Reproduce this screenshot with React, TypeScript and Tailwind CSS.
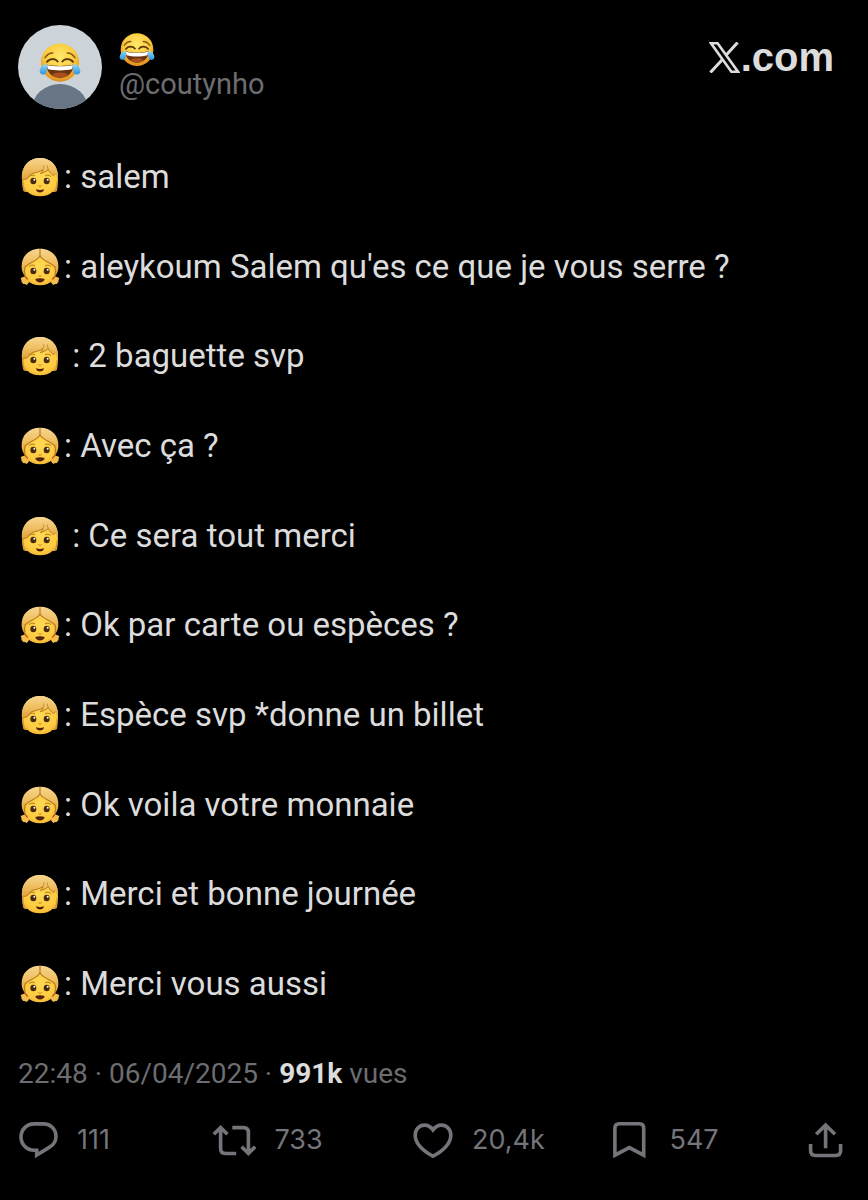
import type { ReactNode } from 'react'

type Speaker = 'child' | 'girl'

const LINES: { speaker: Speaker; text: string }[] = [
  { speaker: 'child', text: ': salem' },
  { speaker: 'girl', text: ": aleykoum Salem qu'es ce que je vous serre ?" },
  { speaker: 'child', text: ' : 2 baguette svp' },
  { speaker: 'girl', text: ': Avec ça ?' },
  { speaker: 'child', text: ' : Ce sera tout merci' },
  { speaker: 'girl', text: ': Ok par carte ou espèces ?' },
  { speaker: 'child', text: ': Espèce svp *donne un billet' },
  { speaker: 'girl', text: ': Ok voila votre monnaie' },
  { speaker: 'child', text: ': Merci et bonne journée' },
  { speaker: 'girl', text: ': Merci vous aussi' },
]

const Gradients = () => (
  <svg className="absolute size-0" aria-hidden="true">
    <defs>
      <radialGradient id="joy" cx="0.5" cy="0.35" r="0.65">
        <stop offset="0" stopColor="#ffe96b" />
        <stop offset="0.6" stopColor="#fbcb3f" />
        <stop offset="1" stopColor="#e08a1c" />
      </radialGradient>
      <radialGradient id="skin" cx="0.5" cy="0.4" r="0.65">
        <stop offset="0" stopColor="#ffd953" />
        <stop offset="0.75" stopColor="#fdcb40" />
        <stop offset="1" stopColor="#eeae30" />
      </radialGradient>
      <linearGradient id="hair" x1="0" y1="0" x2="0" y2="1">
        <stop offset="0" stopColor="#f6d68e" />
        <stop offset="0.5" stopColor="#efbf62" />
        <stop offset="1" stopColor="#dda038" />
      </linearGradient>
      <linearGradient id="tear" x1="0" y1="0" x2="0" y2="1">
        <stop offset="0" stopColor="#8fdcfb" />
        <stop offset="1" stopColor="#2f94dc" />
      </linearGradient>
    </defs>
  </svg>
)

const Joy = ({ className }: { className: string }) => (
  <svg className={className} viewBox="0 0 110 104" role="img" aria-label="😂">
    <circle cx="55" cy="51" r="50" fill="url(#joy)" />
    <path
      d="M16 38c5-8 12-12 20-12M94 38c-5-8-12-12-20-12"
      fill="none"
      stroke="#8a5311"
      strokeWidth="4"
      strokeLinecap="round"
    />
    <path
      d="M21 49c6-9 21-10 28-1M89 49c-6-9-21-10-28-1"
      fill="none"
      stroke="#5f3609"
      strokeWidth="5"
      strokeLinecap="round"
    />
    <path d="M20 56c20 5 50 5 70 0 1 20-14 35-35 35S19 76 20 56z" fill="#6b3410" />
    <path d="M21 57c20 5 48 5 68 0l-2 11c-18 5-46 5-64 0z" fill="#fff" />
    <path d="M34 83c10-8 32-8 42 0-10 9-32 9-42 0z" fill="#a9501d" />
    <path d="M20 54C9 57 1 65 2 75c1 9 14 10 18 1 2-6 2-14 0-22z" fill="url(#tear)" />
    <path d="M90 54c11 3 19 11 18 21-1 9-14 10-18 1-2-6-2-14 0-22z" fill="url(#tear)" />
  </svg>
)

const Eyes = () => (
  <>
    <ellipse cx="40" cy="72" rx="9" ry="10" fill="#4a2a0c" />
    <ellipse cx="80" cy="72" rx="9" ry="10" fill="#4a2a0c" />
    <circle cx="43" cy="68" r="3" fill="#fff" />
    <circle cx="83" cy="68" r="3" fill="#fff" />
    <path
      d="M28 58c4-4 11-5 16-2M92 58c-4-4-11-5-16-2"
      fill="none"
      stroke="#b3751c"
      strokeWidth="3"
      strokeLinecap="round"
    />
    <path d="M56 86c2 3 6 3 8 0" fill="none" stroke="#cc7d1b" strokeWidth="3" strokeLinecap="round" />
  </>
)

const Child = () => (
  <svg className="size-10 flex-none" viewBox="0 0 120 120" role="img" aria-label="🧒">
    <path d="M6 62C4 26 28 3 60 3s56 23 54 60c0 14-1 26-3 38-4 4-9 5-14 4H24c-6 1-11 0-14-4-3-12-4-25-4-39z" fill="url(#hair)" />
    <path d="M8 64c0-26 15-44 52-44s52 18 52 44c0 36-20 54-52 54S8 100 8 64z" fill="url(#skin)" />
    <path
      d="M6 70C2 28 30 3 60 3s58 23 54 67c-3-6-5-13-7-20-3 3-5 5-8 5-6-5-11-11-14-17-7 6-14 9-24 12 4-4 6-7 8-12-11 7-24 9-34 12-6 7-9 13-16 17-6 1-10 2-13 3z"
      fill="url(#hair)"
    />
    <path
      d="M6 70c5-2 10-4 15-5 5-4 9-9 14-15 10-3 23-5 34-12-2 5-4 8-8 12 10-3 17-6 24-12 3 6 8 12 14 17 3 0 5-2 8-5"
      fill="none"
      stroke="#b97a25"
      strokeWidth="3"
      strokeLinejoin="round"
    />
    <path d="M9 72c0 12 1 22 4 30M111 72c0 12-1 22-4 30" fill="none" stroke="#d29032" strokeWidth="3" />
    <path d="M69 38c2-4 3-8 2-13M85 38c-2-4-3-8-3-12" fill="none" stroke="#c68c35" strokeWidth="3" />
    <Eyes />
    <path d="M48 97c7 3 17 3 24 0-1 13-23 13-24 0z" fill="#56210e" />
  </svg>
)

const Girl = () => (
  <svg className="size-10 flex-none" viewBox="0 0 120 120" role="img" aria-label="👧">
    <path d="M20 88c-8 0-14 3-18 6 3 5 3 9 2 12 3 0 4 2 5 5 4-1 8 0 11 3 6-4 9-11 9-18z" fill="#f2bd4c" />
    <path d="M100 88c8 0 14 3 18 6-3 5-3 9-2 12-3 0-4 2-5 5-4-1-8 0-11 3-6-4-9-11-9-18z" fill="#f2bd4c" />
    <path d="M5 62C3 27 27 5 60 5s57 22 55 57c-1 12-5 20-11 25H16C10 82 6 74 5 62z" fill="url(#hair)" />
    <path d="M60 24c5 17 29 18 45 36 7 34-12 55-45 55S8 94 15 60c16-18 40-19 45-36z" fill="url(#skin)" />
    <path
      d="M60 6v19M60 25c-5 17-29 18-45 35-2 8-2 16 0 24M60 25c5 17 29 18 45 35 2 8 2 16 0 24"
      fill="none"
      stroke="#b97a25"
      strokeWidth="3.5"
      strokeLinecap="round"
    />
    <path d="M14 87l8 9M106 87l-8 9" stroke="#c4571d" strokeWidth="4" strokeLinecap="round" />
    <Eyes />
    <path d="M46 96c9-3 19-3 28 0-1 14-27 14-28 0z" fill="#56210e" />
  </svg>
)

const Avatar = () => (
  <div className="relative flex size-21 flex-none justify-center overflow-hidden rounded-full bg-[#ccd4d9]">
    <svg className="absolute inset-0 size-full" viewBox="0 0 84 84" aria-hidden="true">
      <ellipse cx="42" cy="84" rx="28" ry="25" fill="#677585" />
    </svg>
    <Joy className="relative mt-[18px] h-10 w-[42px]" />
  </div>
)

const Stroke = ({ className, viewBox, d }: { className: string; viewBox: string; d: string }) => (
  <svg className={className} viewBox={viewBox} fill="none" stroke="currentColor" strokeWidth="3.6" aria-hidden="true">
    <path d={d} />
  </svg>
)

const ACTIONS: { label: string; count: string; icon: ReactNode }[] = [
  {
    label: 'Répondre',
    count: '111',
    icon: (
      <Stroke
        className="h-10 w-10"
        viewBox="0 0 40 40"
        d="M16 3.9h9.5C32.5 3.9 38 9.3 38 16.2c0 4.6-2.4 8.6-6.4 10.9L18.7 35V30.3H16C8.5 30.3 3 24.2 3 17 3 9.5 8.8 3.9 16 3.9z"
      />
    ),
  },
  {
    label: 'Reposter',
    count: '733',
    icon: (
      <Stroke
        className="-ml-1 h-10 w-11"
        viewBox="0 0 44 40"
        d="M1.8 14.2L8.6 7.6l6.8 6.6M8.6 8v20.5q0 5 5 5H24.2M20.3 7.6H31.4q5 0 5 5V33M29.6 26.8l6.8 6.6 6.8-6.6"
      />
    ),
  },
  {
    label: 'Aimer',
    count: '20,4k',
    icon: (
      <Stroke
        className="h-10 w-10"
        viewBox="0 0 40 40"
        d="M20 9.9C17.6 6.6 14.8 5.1 11.6 5.1 6.2 5.1 2.2 9.4 2.2 15.2c0 7.6 6.2 14.6 17.8 21.1 11.6-6.5 17.8-13.5 17.8-21.1 0-5.8-4-10.1-9.4-10.1-3.2 0-6 1.5-8.4 4.8z"
      />
    ),
  },
  {
    label: 'Signet',
    count: '547',
    icon: (
      <Stroke
        className="h-10 w-10"
        viewBox="0 0 40 40"
        d="M8.2 3.8h20.2q4.3 0 4.3 4.3V35.2L18.3 27.6 3.9 35.2V8.1q0-4.3 4.3-4.3z"
      />
    ),
  },
]

const App = () => {
  return (
    <main className="flex min-h-screen flex-col bg-black px-[18px] pt-[25px] pb-10 font-['Roboto',sans-serif] text-[#dcdcdc]">
      <Gradients />

      <header className="flex items-start">
        <Avatar />
        <div className="ml-[17px] pt-2">
          <Joy className="h-[34px] w-9" />
          <a href="#profil" className="block text-[29px] leading-[34px] text-[#6b6d70]">
            @coutynho
          </a>
        </div>
        <a
          href="#x"
          className="mt-[10px] mr-4 ml-auto flex items-center gap-px font-['Liberation_Sans',sans-serif] text-[40px] leading-[44px] font-bold"
        >
          <svg className="h-[31px] w-[31px]" viewBox="0 0 31 31" fill="none" stroke="currentColor" aria-label="X">
            <path d="M2 1.3h6.6L29 29.7h-6.6z" strokeWidth="2.6" />
            <path d="M28.6 0.5L16.8 13.6M13.4 17.6L1.4 30.5" strokeWidth="3" />
          </svg>
          .com
        </a>
      </header>

      <div className="mt-[46px] mb-[50px] flex flex-1 flex-col justify-between gap-4">
        {LINES.map(({ speaker, text }) => (
          <p className="flex items-center gap-1 pl-0.5 text-[33px] leading-[44px]" key={text}>
            {speaker === 'child' ? <Child /> : <Girl />}
            <span className="whitespace-pre-wrap">{text}</span>
          </p>
        ))}
      </div>

      <p className="text-[28px] leading-9 text-[#6b6d70]">
        22:48 · 06/04/2025 · <strong className="font-bold text-[#dcdcdc]">991k</strong> vues
      </p>

      <footer className="mt-7 grid grid-cols-[repeat(4,1fr)_auto] pr-1.5 font-['Inter',sans-serif] text-[27px] leading-10 text-[#73757a]">
        {ACTIONS.map(({ label, count, icon }) => (
          <button className="flex items-center gap-[19px] text-left" type="button" aria-label={label} key={label}>
            {icon}
            <span>{count}</span>
          </button>
        ))}
        <button type="button" aria-label="Partager">
          <Stroke
            className="h-10 w-9"
            viewBox="0 0 36 40"
            d="M2.6 24v6.5q0 5 5 5h20q5 0 5-5V24M17.6 28.3V5.4M8.2 14.3l9.4-9.2 9.4 9.2"
          />
        </button>
      </footer>
    </main>
  )
}

export default App
